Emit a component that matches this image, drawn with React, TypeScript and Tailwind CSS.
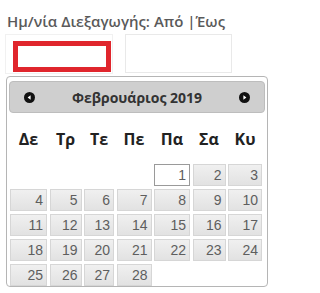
const days = ['Δε', 'Τρ', 'Τε', 'Πε', 'Πα', 'Σα', 'Κυ']

function Arrow({ dir }: { dir: 'left' | 'right' }) {
  return (
    <svg width="11" height="11" viewBox="0 0 11 11">
      <circle cx="5.5" cy="5.5" r="5.5" fill="#111" />
      {dir === 'left' ? (
        <path d="M3.6 5.5 L6.6 3.2 L6.6 7.8 Z" fill="#fff" />
      ) : (
        <path d="M7.4 5.5 L4.4 3.2 L4.4 7.8 Z" fill="#fff" />
      )}
    </svg>
  )
}

export default function App() {
  // Feb 2019 starts on Friday (5th column)
  const cells: (number | null)[] = [null, null, null, null]
  for (let d = 1; d <= 28; d++) cells.push(d)

  return (
    <div className="relative w-[271px] h-[293px] bg-white overflow-hidden" style={{ fontFamily: '"Open Sans", sans-serif' }}>
      <div className="pt-[11px] pl-[7px] text-[15px] font-semibold text-[#5a5a5a] leading-[20px]">
        Ημ/νία Διεξαγωγής: Από |Έως
      </div>
      <div className="flex mt-[3px] pl-[5px] gap-[12px]">
        <div className="w-[108px] h-[40px] border border-[#f1f1f1] pl-[7px] pt-[6px] pr-[1px]">
          <div className="h-[31px] border-[5px] border-[#e0262d] bg-white" />
        </div>
        <div className="w-[107px] h-[39px] border border-[#e9e9e9]" />
      </div>

      <div className="absolute left-[6px] top-[76px] w-[262px] h-[211px] bg-white border border-[#b5b5b5] rounded-[4px] px-[2px] pt-[4px]">
        <div className="flex items-center justify-between h-[32px] bg-[#cfcfcf] border border-[#bdbdbd] rounded-[4px] px-[14px]">
          <Arrow dir="left" />
          <span className="text-[14px] font-bold text-[#333]">Φεβρουάριος 2019</span>
          <Arrow dir="right" />
        </div>
        <div
          className="grid grid-cols-[37px_32px_30px_35px_36px_33px_34px] gap-x-[2.5px] pl-[1px] mt-[10px] h-[32px] items-center text-[16px] font-bold text-[#222]"
        >
          {days.map((d) => (
            <div key={d} className="text-center">{d}</div>
          ))}
        </div>
        <div
          className="grid grid-cols-[37px_32px_30px_35px_36px_33px_34px] gap-x-[2.5px] gap-y-[3px] pl-[1px] mt-[9px]"
          style={{ fontFamily: '"Liberation Sans", Arial, sans-serif' }}
        >
          {cells.map((d, i) =>
            d === null ? (
              <div key={i} className="h-[22px]" />
            ) : (
              <div
                key={i}
                className={
                  d === 1
                    ? 'h-[22px] border border-[#9a9a9a] bg-white text-right pr-[3px] text-[14px] leading-[20px] text-[#5e5e5e]'
                    : 'h-[22px] border border-[#d6d6d6] bg-gradient-to-b from-[#f0f0f0] to-[#e2e2e2] text-right pr-[3px] text-[14px] leading-[20px] text-[#5e5e5e]'
                }
              >
                {d}
              </div>
            ),
          )}
        </div>
      </div>
    </div>
  )
}
